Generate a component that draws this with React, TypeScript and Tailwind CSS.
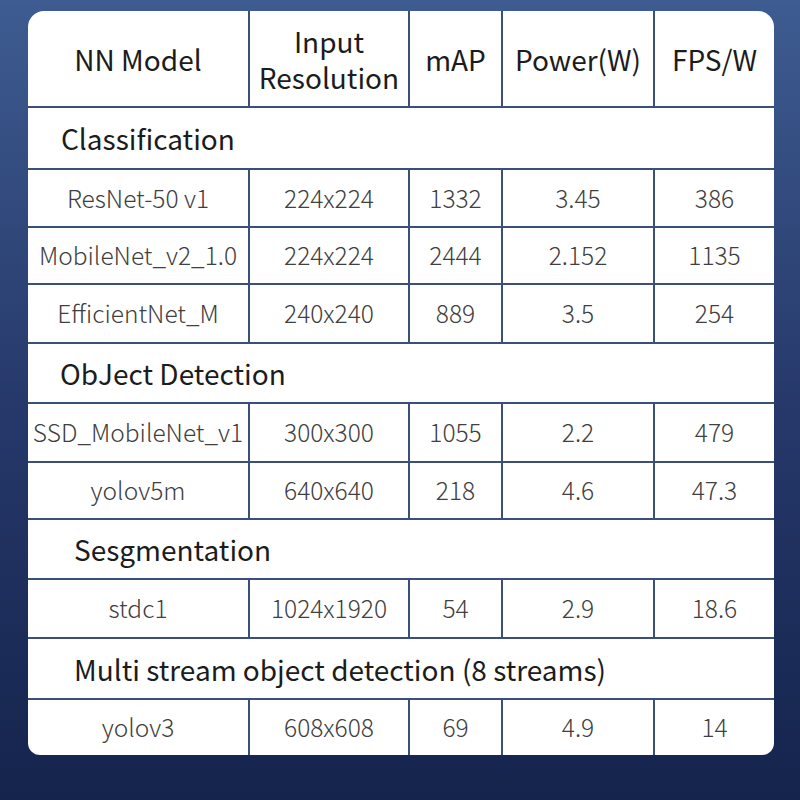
const font = { fontFamily: '"Noto Sans CJK SC", "Noto Sans", sans-serif' };

type Row =
  | { kind: "section"; label: string; h: string; pad: string }
  | { kind: "data"; cells: string[]; h: string };

const rows: Row[] = [
  { kind: "section", label: "Classification", h: "h-[62px]", pad: "pl-[33px]" },
  { kind: "data", cells: ["ResNet-50 v1", "224x224", "1332", "3.45", "386"], h: "h-[58px]" },
  { kind: "data", cells: ["MobileNet_v2_1.0", "224x224", "2444", "2.152", "1135"], h: "h-[57px]" },
  { kind: "data", cells: ["EfficientNet_M", "240x240", "889", "3.5", "254"], h: "h-[59px]" },
  { kind: "section", label: "ObJect Detection", h: "h-[60px]", pad: "pl-[32px]" },
  { kind: "data", cells: ["SSD_MobileNet_v1", "300x300", "1055", "2.2", "479"], h: "h-[59px]" },
  { kind: "data", cells: ["yolov5m", "640x640", "218", "4.6", "47.3"], h: "h-[57px]" },
  { kind: "section", label: "Sesgmentation", h: "h-[60px]", pad: "pl-[46px]" },
  { kind: "data", cells: ["stdc1", "1024x1920", "54", "2.9", "18.6"], h: "h-[59px]" },
  { kind: "section", label: "Multi stream object detection (8 streams)", h: "h-[61px]", pad: "pl-[46px]" },
  { kind: "data", cells: ["yolov3", "608x608", "69", "4.9", "14"], h: "h-[57px]" },
];

const widths = ["w-[220px]", "w-[160px]", "w-[93px]", "w-[152px]", "w-[121px]"];

export default function App() {
  return (
    <div
      className="w-[800px] h-[800px] bg-gradient-to-b from-[#3e5c91] via-[#27396b] to-[#14244d] pt-[11px] pl-[28px]"
      style={font}
    >
      <div className="w-[746px] bg-white rounded-t-[16px] rounded-b-[12px] overflow-hidden">
        {/* header */}
        <div className="flex h-[95px] text-[28px] text-[#1c1c1c]">
          {["NN Model", "Input\nResolution", "mAP", "Power(W)", "FPS/W"].map((t, i) => (
            <div
              key={t}
              className={`${widths[i]} shrink-0 flex items-center justify-center text-center whitespace-pre-line leading-[36px] ${
                i > 0 ? "border-l-2 border-[#3c4e7a]" : ""
              }`}
            >
              {t}
            </div>
          ))}
        </div>

        {rows.map((r, idx) =>
          r.kind === "section" ? (
            <div
              key={idx}
              className={`${r.h} ${r.pad} flex items-center border-t-2 border-[#3c4e7a] text-[28px] text-[#1c1c1c] whitespace-nowrap`}
            >
              {r.label}
            </div>
          ) : (
            <div key={idx} className={`${r.h} flex border-t-2 border-[#3c4e7a] text-[24.5px] text-[#404040] font-light`}>
              {r.cells.map((c, i) => (
                <div
                  key={i}
                  className={`${widths[i]} shrink-0 flex items-center justify-center whitespace-nowrap ${
                    i > 0 ? "border-l-2 border-[#3c4e7a]" : ""
                  }`}
                >
                  {c}
                </div>
              ))}
            </div>
          )
        )}
      </div>
    </div>
  );
}
